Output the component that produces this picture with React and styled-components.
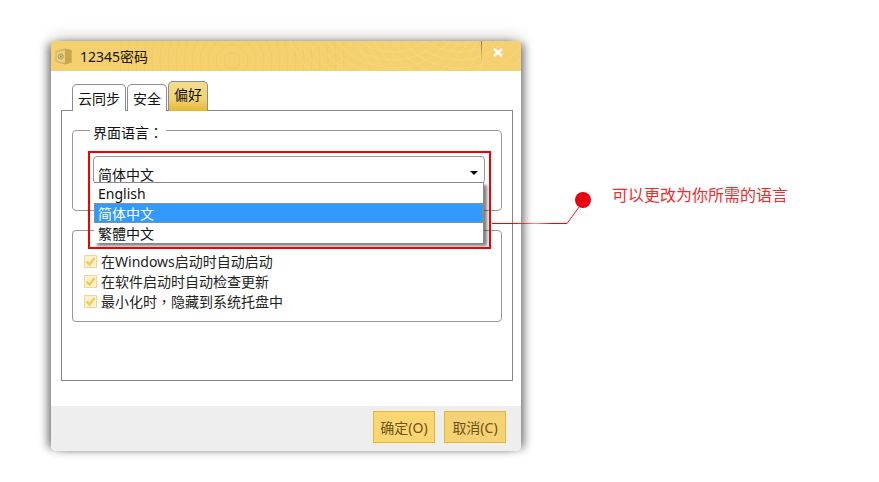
import React from 'react';
import styled, { createGlobalStyle } from 'styled-components';

const GlobalStyle = createGlobalStyle`
  html, body { margin: 0; padding: 0; background: #fff; }
  body {
    font-family: "Noto Sans", "Noto Sans CJK SC", sans-serif;
    font-size: 14px;
    color: #111;
  }
`;

const Page = styled.div`
  position: relative;
  width: 879px;
  height: 482px;
  padding: 41px 0 0 51px;
  box-sizing: border-box;
  overflow: hidden;
`;

const Dialog = styled.div`
  width: 470px;
  height: 410px;
  display: flex;
  flex-direction: column;
  background: #fff;
  border-radius: 3px 3px 5px 5px;
  box-shadow: 6px 0 8px -3px rgba(0, 0, 0, 0.48), -6px 0 8px -3px rgba(0, 0, 0, 0.48),
    0 -4px 16px rgba(0, 0, 0, 0.16);
`;

const TitleBar = styled.div`
  position: relative;
  flex: none;
  height: 30px;
  display: flex;
  align-items: center;
  gap: 8px;
  padding-left: 4px;
  background: #f5d06e;
  border-radius: 3px 3px 0 0;
  overflow: hidden;
`;

const TitleText = styled.span`
  position: relative;
  font-size: 14px;
  color: #1a1408;
`;

const Texture = styled.svg`
  position: absolute;
  left: 0;
  top: 0;
`;

const CloseSep = styled.div`
  position: absolute;
  left: 430px;
  top: 0;
  width: 1px;
  height: 19px;
  background: linear-gradient(#8d7a45, rgba(141, 122, 69, 0.1));
`;

const CloseIcon = styled.svg`
  position: absolute;
  left: 441px;
  top: 7px;
`;

const Body = styled.div`
  flex: 1;
  padding: 10px 8px 25px 10px;
  display: flex;
  flex-direction: column;
`;

const TabRow = styled.div`
  flex: none;
  height: 29px;
  display: flex;
  align-items: flex-end;
  gap: 1px;
  padding-left: 11px;
`;

const Tab = styled.div`
  box-sizing: border-box;
  width: ${(p) => p.$w}px;
  height: ${(p) => (p.$active ? 30 : 27)}px;
  margin-bottom: -1px;
  position: relative;
  display: flex;
  align-items: center;
  justify-content: center;
  padding-bottom: ${(p) => (p.$active ? 5 : 0)}px;
  border: 1px solid #8c8c8c;
  border-bottom: 0;
  border-radius: 5px 5px 0 0;
  background: ${(p) => (p.$active ? 'linear-gradient(#f7dc8e, #f3d273 60%, #e6b632)' : '#fff')};
`;

const Pane = styled.div`
  flex: 1;
  box-sizing: border-box;
  border: 1px solid #858585;
  padding: 19px 10px;
  display: flex;
  flex-direction: column;
  gap: 19px;
`;

const Group = styled.div`
  position: relative;
  z-index: ${(p) => p.$z || 0};
  box-sizing: border-box;
  width: 430px;
  height: ${(p) => p.$h}px;
  border: 1px solid #999;
  border-radius: 4px;
  padding: ${(p) => p.$pad};
`;

const Legend = styled.span`
  position: absolute;
  left: 17px;
  top: -9px;
  padding: 0 3px;
  background: #fff;
  line-height: 20px;
`;

const Punct = styled.span`
  font-family: "Noto Sans CJK TC", sans-serif;
`;

const SelectWrap = styled.div`
  position: relative;
  width: 392px;
`;

const SelectBox = styled.div`
  box-sizing: border-box;
  height: 28px;
  padding: 9px 0 0 4px;
  border: 1px solid #999;
  border-radius: 4px;
  line-height: 18px;
`;

const Caret = styled.div`
  position: absolute;
  right: 7px;
  top: 15px;
  width: 0;
  height: 0;
  border: 4px solid transparent;
  border-top: 4px solid #000;
  border-bottom: 0;
`;

const Dropdown = styled.div`
  position: absolute;
  left: 1px;
  top: 26px;
  width: 390px;
  box-sizing: border-box;
  background: #fff;
  border-top: 1px solid #8a8a92;
  border-right: 1px solid #8a8a92;
  box-shadow: 3px 3px 3px rgba(0, 0, 0, 0.5);
`;

const Option = styled.div`
  box-sizing: border-box;
  height: 20px;
  line-height: ${(p) => (p.$selected ? 19 : 21)}px;
  padding-left: ${(p) => (p.$selected ? 3 : 4)}px;
  color: ${(p) => (p.$selected ? '#fff' : '#111')};
  background: ${(p) => (p.$selected ? '#3399ff' : 'transparent')};
  border: ${(p) => (p.$selected ? '1px dotted #c98a3a' : '0')};
`;

const RedFrame = styled.div`
  position: absolute;
  left: -5px;
  top: -5px;
  width: 403px;
  height: 98px;
  box-sizing: border-box;
  border: 2px solid #f00000;
  pointer-events: none;
`;

const CheckRow = styled.div`
  height: 20px;
  display: flex;
  align-items: center;
  gap: 4px;
  color: #222;
`;

const CheckBox = styled.span`
  box-sizing: border-box;
  width: 13px;
  height: 13px;
  display: flex;
  align-items: center;
  justify-content: center;
  border: 1px solid #f0d894;
  background: #fbf1d4;
`;

const Footer = styled.div`
  flex: none;
  height: 45px;
  box-sizing: border-box;
  padding: 5px 15px 0 0;
  display: flex;
  justify-content: flex-end;
  gap: 9px;
  background: #eeeeee;
  border-radius: 0 0 5px 5px;
`;

const Button = styled.div`
  box-sizing: border-box;
  width: 62px;
  height: 32px;
  display: flex;
  align-items: center;
  justify-content: center;
  background: ${(p) => (p.$primary ? '#fcd672' : '#f6d277')};
  border: 1px solid #e8b732;
  color: #6b5210;
`;

const CalloutLine = styled.svg`
  position: absolute;
  left: 490px;
  top: 190px;
`;

const CalloutText = styled.div`
  position: absolute;
  left: 612px;
  top: 185px;
  font-size: 16px;
  line-height: 20px;
  color: #f5282c;
`;

const SafeIcon = () => (
  <svg width="17" height="17" viewBox="0 0 17 17">
    <path d="M0.5 3 L10 0.5 L16.5 2 L16.5 14.5 L10 16.5 L0.5 14 Z" fill="#d3b35c" />
    <path d="M10 0.5 L16.5 2 L16.5 14.5 L10 16.5 Z" fill="#c7a64e" />
    <path d="M1.5 4 L10 2.2 L10 14.8 L1.5 13 Z" fill="#e9d08a" />
    <circle cx="5.8" cy="8.5" r="2.6" fill="#dcc27a" stroke="#b99c50" strokeWidth="1" />
    <circle cx="5.8" cy="8.5" r="0.9" fill="#a98f48" />
  </svg>
);

const Check = () => (
  <svg width="11" height="11" viewBox="0 0 11 11">
    <path d="M1.5 5.5 L4.5 8.5 L9.5 2" fill="none" stroke="#f7c843" strokeWidth="2.2" />
  </svg>
);

const arcs = [8, 16, 24, 32, 40, 48, 56, 64, 72, 80, 88, 96, 104, 112];

export default function App() {
  return (
    <Page>
      <GlobalStyle />
      <Dialog>
        <TitleBar>
          <Texture width="470" height="30" viewBox="0 0 470 30">
            {arcs.map((r) => (
              <circle key={`a${r}`} cx="181" cy="20" r={r} fill="none" stroke="#f3ca62" strokeWidth="1" />
            ))}
            {arcs.map((r) => (
              <circle key={`b${r}`} cx="342" cy="-45" r={r} fill="none" stroke="#f7d67c" strokeWidth="1" />
            ))}
            {arcs.map((r) => (
              <circle key={`c${r}`} cx="408" cy="-45" r={r} fill="none" stroke="#f7d67c" strokeWidth="1" />
            ))}
          </Texture>
          <SafeIcon />
          <TitleText>12345密码</TitleText>
          <CloseSep />
          <CloseIcon width="12" height="9" viewBox="0 0 12 9">
            <path d="M2 1 L10 8 M10 1 L2 8" stroke="#fff" strokeWidth="2.4" />
          </CloseIcon>
        </TitleBar>
        <Body>
          <TabRow>
            <Tab $w={54}>云同步</Tab>
            <Tab $w={40}>安全</Tab>
            <Tab $w={40} $active>偏好</Tab>
          </TabRow>
          <Pane>
            <Group $h={81} $z={2} $pad="25px 0 0 20px">
              <Legend>界面语言<Punct>：</Punct></Legend>
              <SelectWrap>
                <SelectBox>简体中文</SelectBox>
                <Caret />
                <Dropdown>
                  <Option>English</Option>
                  <Option $selected>简体中文</Option>
                  <Option>繁體中文</Option>
                </Dropdown>
                <RedFrame />
              </SelectWrap>
            </Group>
            <Group $h={92} $z={1} $pad="20px 0 0 11px">
              <CheckRow><CheckBox><Check /></CheckBox><span>在Windows启动时自动启动</span></CheckRow>
              <CheckRow><CheckBox><Check /></CheckBox><span>在软件启动时自动检查更新</span></CheckRow>
              <CheckRow><CheckBox><Check /></CheckBox><span>最小化时<Punct>，</Punct>隐藏到系统托盘中</span></CheckRow>
            </Group>
          </Pane>
        </Body>
        <Footer>
          <Button $primary>确定(O)</Button>
          <Button>取消(C)</Button>
        </Footer>
      </Dialog>
      <CalloutLine width="110" height="50" viewBox="0 0 110 50">
        <defs>
          <linearGradient id="fade" x1="0" x2="1" y1="0" y2="0">
            <stop offset="0" stopColor="#ff0000" />
            <stop offset="0.3" stopColor="#ff0000" />
            <stop offset="0.58" stopColor="#ff0000" stopOpacity="0.45" />
            <stop offset="0.8" stopColor="#ff0000" />
            <stop offset="1" stopColor="#ff0000" />
          </linearGradient>
        </defs>
        <rect x="2" y="33" width="75" height="1" fill="url(#fade)" />
        <path d="M77 33.5 L92 13" fill="none" stroke="#ee1c25" strokeWidth="1" />
        <circle cx="93" cy="10" r="8" fill="#e60012" />
      </CalloutLine>
      <CalloutText>可以更改为你所需的语言</CalloutText>
    </Page>
  );
}
